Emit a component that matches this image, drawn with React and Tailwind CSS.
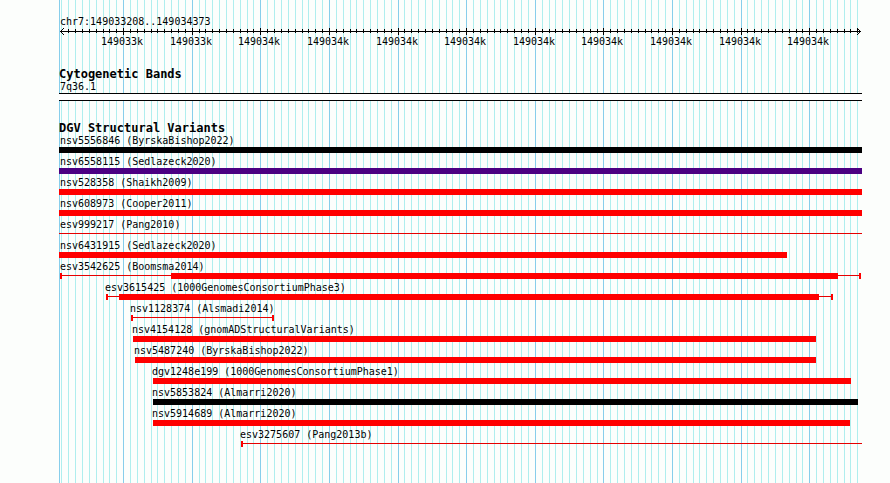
import React from 'react';

// Drawing units across the panel, all x values below count from its left edge
const PANEL = 803;
const TICK_START = 2.88;
const TICK_STEP = 6.861;

const ticks = Array.from({ length: 117 }, (_, k) => ({
    x: Math.floor(TICK_START + TICK_STEP * k),
    major: k % 10 === 9,
}));

const variants = [
    { name: 'nsv5556846 (ByrskaBishop2022)', label: 1, bar: [0, 803], color: 'bg-black' },
    { name: 'nsv6558115 (Sedlazeck2020)', label: 1, bar: [0, 803], color: 'bg-[#4b0082]' },
    { name: 'nsv528358 (Shaikh2009)', label: 1, bar: [0, 803] },
    { name: 'nsv608973 (Cooper2011)', label: 1, bar: [0, 803] },
    { name: 'esv999217 (Pang2010)', label: 1, line: [0, 803] },
    { name: 'nsv6431915 (Sedlazeck2020)', label: 1, bar: [0, 728] },
    { name: 'esv3542625 (Boomsma2014)', label: 1, line: [1, 802], bar: [112, 779], caps: [1, 800] },
    { name: 'esv3615425 (1000GenomesConsortiumPhase3)', label: 46, line: [47, 774], bar: [60, 760], caps: [47, 772] },
    { name: 'nsv1128374 (Alsmadi2014)', label: 71, line: [72, 215], caps: [72, 213] },
    { name: 'nsv4154128 (gnomADStructuralVariants)', label: 73, bar: [74, 757] },
    { name: 'nsv5487240 (ByrskaBishop2022)', label: 75, bar: [76, 757] },
    { name: 'dgv1248e199 (1000GenomesConsortiumPhase1)', label: 93, bar: [94, 792] },
    { name: 'nsv5853824 (Almarri2020)', label: 93, bar: [94, 799], color: 'bg-black' },
    { name: 'nsv5914689 (Almarri2020)', label: 93, bar: [94, 791] },
    { name: 'esv3275607 (Pang2013b)', label: 181, line: [182, 803], caps: [182] },
];

const pct = (x) => `${(x / PANEL) * 100}%`;
const span = ([from, to]) => ({ left: pct(from), width: pct(to - from) });

const GridLines = () => (
    <svg className="absolute inset-0 h-full w-full" shapeRendering="crispEdges" aria-hidden="true">
        <rect x="0" y="0" width="1" height="100%" fill="#87ceeb" />
        {ticks.map(({ x, major }) => (
            <rect key={x} x={pct(x)} y="0" width="1" height="100%" fill={major ? '#87ceeb' : '#afeeee'} />
        ))}
    </svg>
);

const Ruler = () => (
    <div>
        <svg className="block h-[7px] w-full overflow-visible" shapeRendering="crispEdges" aria-hidden="true">
            <rect x={pct(1)} y="3" width={pct(801)} height="1" />
            {ticks.slice(1).map(({ x, major }) => (
                <rect key={x} x={pct(x)} y={major ? 0 : 1} width="1" height={major ? 7 : 4} />
            ))}
            <path d="M5 0L1.5 3.5L5 7" fill="none" stroke="#000" />
            <svg x={pct(797)} width="6" height="7">
                <path d="M1 0L4.5 3.5L1 7" fill="none" stroke="#000" />
            </svg>
        </svg>
        <div className="relative h-[13px]">
            {ticks.filter((t) => t.major).map(({ x }, i) => (
                <span key={x} className="absolute -translate-x-1/2" style={{ left: pct(x - 1) }}>
                    {i < 2 ? '149033k' : '149034k'}
                </span>
            ))}
        </div>
    </div>
);

const Variant = ({ name, label, bar, line, caps = [], color = 'bg-[#ff0000]' }) => (
    <li className="mb-[2px]">
        <p className="whitespace-nowrap" style={{ paddingLeft: pct(label) }}>{name}</p>
        <div className="relative h-[6px]">
            {line && <div className="absolute top-[2px] h-px bg-[#e60000]" style={span(line)} />}
            {bar && <div className={`absolute h-full ${color}`} style={span(bar)} />}
            {caps.map((x) => (
                <div key={x} className="absolute h-full w-[2px] bg-[#ff0000]" style={{ left: pct(x) }} />
            ))}
        </div>
    </li>
);

const App = () => {
    return (
        <div className="min-h-screen bg-[#fcfefc] pl-[59px] pr-7 font-['DejaVu_Sans_Mono',monospace] text-[10px] leading-[13px] text-black">
            <main className="relative min-h-screen pt-[15px]">
                <GridLines />
                <div className="relative">
                    <p className="pl-px">chr7:149033208..149034373</p>
                    <Ruler />

                    <section className="mt-5">
                        <h2 className="text-[12px] font-bold leading-[12px]">Cytogenetic Bands</h2>
                        <p className="pl-px">7q36.1</p>
                        <div className="h-2 border-y border-black bg-white" />
                    </section>

                    <section className="mt-[21px]">
                        <h2 className="text-[12px] font-bold leading-[12px]">DGV Structural Variants</h2>
                        <ul>
                            {variants.map((v) => (
                                <Variant key={v.name} {...v} />
                            ))}
                        </ul>
                    </section>
                </div>
            </main>
        </div>
    );
};

export default App;
